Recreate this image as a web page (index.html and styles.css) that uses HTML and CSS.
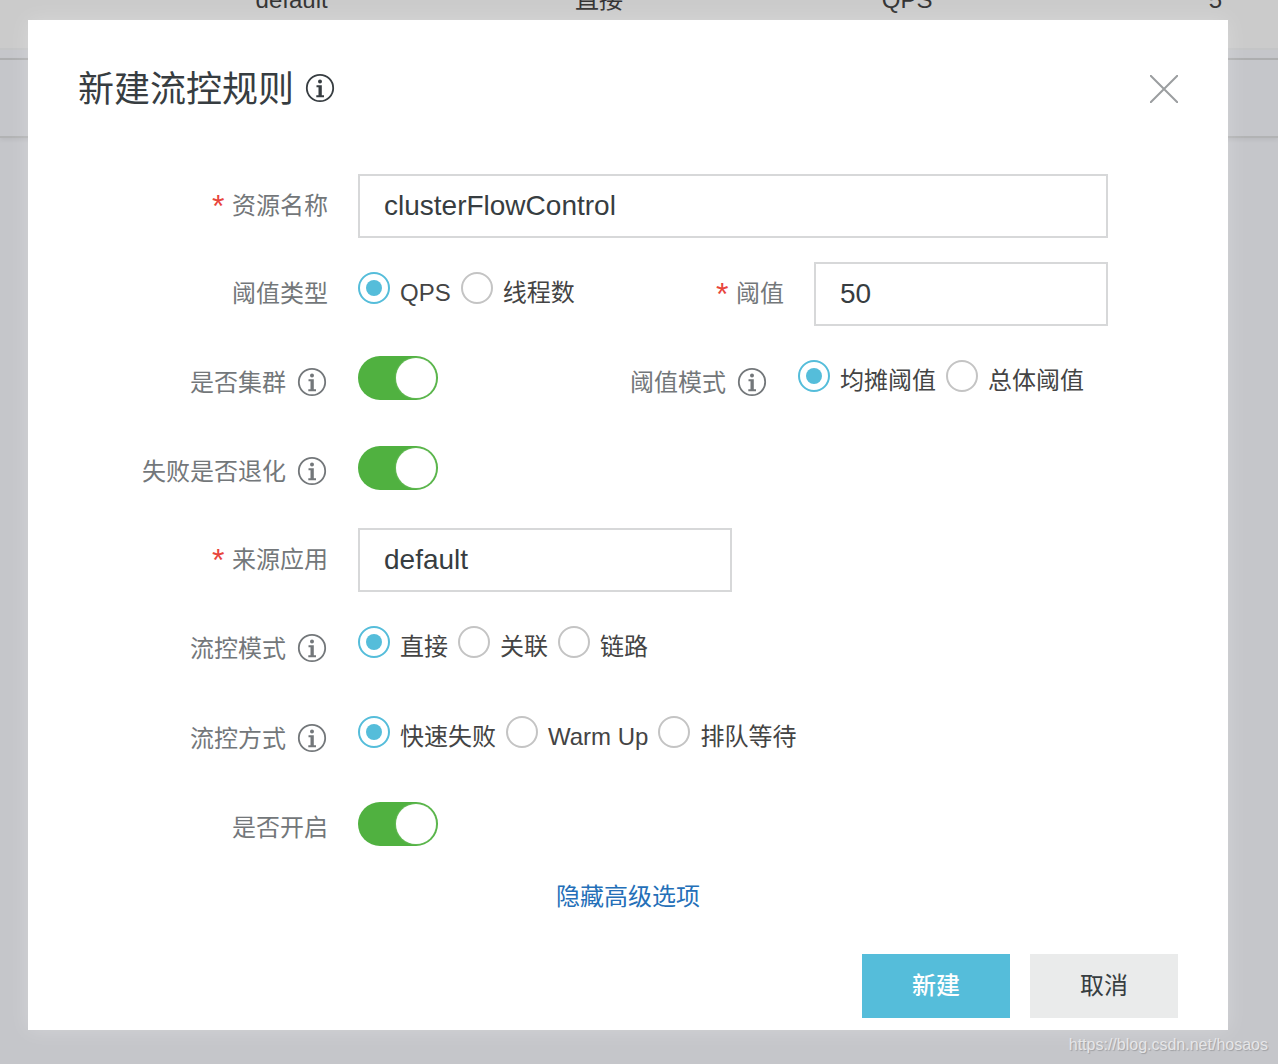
FILE: index.html
```html
<!DOCTYPE html>
<html lang="zh-CN">
<head>
<meta charset="utf-8">
<meta name="viewport" content="width=device-width, initial-scale=1">
<title>新建流控规则</title>
<link rel="stylesheet" href="styles.css">
</head>
<body>
<svg class="sprite" aria-hidden="true">
  <symbol id="info" viewBox="0 0 32 32">
    <circle cx="16" cy="15" r="13.200" fill="none" stroke="currentColor" stroke-width="1.800"/>
    <circle cx="16" cy="8.500" r="2" fill="currentColor"/>
    <path d="M12.500 12.300h5.300v10h2.200v2h-7.700v-2h2.200v-8h-2z" fill="currentColor"/>
  </symbol>
</svg>

<main class="page">
  <table class="rules">
    <tr><td class="col-blank"></td><td class="col-wide">default</td><td class="col-mid">直接</td><td class="col-last">QPS</td><td>5</td></tr>
  </table>
  <div class="pager"></div>
</main>

<div class="overlay">
  <section class="modal" role="dialog" aria-labelledby="dialog-title">
    <header class="modal-header">
      <h1 class="title" id="dialog-title">新建流控规则</h1>
      <svg class="info title-info" role="img" aria-label="说明"><use href="#info"/></svg>
      <button class="close" type="button" aria-label="关闭">
        <svg viewBox="0 0 28 28"><path d="M0 0l28 28M28 0L0 28" fill="none" stroke="currentColor" stroke-width="2"/></svg>
      </button>
    </header>

    <form>
      <div class="rows">
        <div class="row">
          <label class="name" for="resource"><span class="required">*</span>资源名称</label>
          <input class="text" id="resource" type="text" value="clusterFlowControl">
        </div>

        <div class="row">
          <span class="name" id="type-name">阈值类型</span>
          <div class="radios" role="radiogroup" aria-labelledby="type-name">
            <label class="radio"><input type="radio" name="type" checked>QPS</label>
            <label class="radio"><input type="radio" name="type">线程数</label>
          </div>
          <label class="side-name" for="threshold"><span class="required">*</span>阈值</label>
          <input class="text side-input" id="threshold" type="text" value="50">
        </div>

        <div class="row row-tall">
          <label class="name" for="cluster">是否集群<svg class="info" role="img" aria-label="说明"><use href="#info"/></svg></label>
          <input class="switch" id="cluster" type="checkbox" role="switch" checked>
          <span class="side-name" id="mode-name">阈值模式<svg class="info" role="img" aria-label="说明"><use href="#info"/></svg></span>
          <div class="radios side-radios" role="radiogroup" aria-labelledby="mode-name">
            <label class="radio"><input type="radio" name="mode" checked>均摊阈值</label>
            <label class="radio"><input type="radio" name="mode">总体阈值</label>
          </div>
        </div>

        <div class="row">
          <label class="name" for="fallback">失败是否退化<svg class="info" role="img" aria-label="说明"><use href="#info"/></svg></label>
          <input class="switch" id="fallback" type="checkbox" role="switch" checked>
        </div>

        <div class="row">
          <label class="name" for="origin"><span class="required">*</span>来源应用</label>
          <input class="text origin" id="origin" type="text" value="default">
        </div>

        <div class="row row-tall">
          <span class="name" id="strategy-name">流控模式<svg class="info" role="img" aria-label="说明"><use href="#info"/></svg></span>
          <div class="radios" role="radiogroup" aria-labelledby="strategy-name">
            <label class="radio"><input type="radio" name="strategy" checked>直接</label>
            <label class="radio"><input type="radio" name="strategy">关联</label>
            <label class="radio"><input type="radio" name="strategy">链路</label>
          </div>
        </div>

        <div class="row row-tall">
          <span class="name" id="behavior-name">流控方式<svg class="info" role="img" aria-label="说明"><use href="#info"/></svg></span>
          <div class="radios" role="radiogroup" aria-labelledby="behavior-name">
            <label class="radio"><input type="radio" name="behavior" checked>快速失败</label>
            <label class="radio"><input type="radio" name="behavior">Warm Up</label>
            <label class="radio"><input type="radio" name="behavior">排队等待</label>
          </div>
        </div>

        <div class="row">
          <label class="name" for="enabled">是否开启</label>
          <input class="switch" id="enabled" type="checkbox" role="switch" checked>
        </div>
      </div>

      <p class="advanced"><a href="#">隐藏高级选项</a></p>

      <footer class="actions">
        <button class="button primary" type="submit">新建</button>
        <button class="button" type="button">取消</button>
      </footer>
    </form>
  </section>
</div>
<div class="watermark">https://blog.csdn.net/hosaos</div>
</body>
</html>
```

FILE: styles.css
```css
* {
  box-sizing: border-box;
}

html {
  min-height: 100%;
  background: #c5c6ca;
}

body {
  position: relative;
  min-height: 100vh;
  margin: 0;
  overflow-x: hidden;
  color: #333;
  font: 24px/42px "Liberation Sans", "Noto Sans CJK SC", sans-serif;
}

input,
button {
  margin: 0;
  font-family: inherit;
}

.sprite {
  position: absolute;
  width: 0;
  height: 0;
}

/* Page under the dialog, scrolled part of the way down */
.page {
  position: absolute;
  inset: 0;
  overflow: hidden;
}

.rules {
  width: 100%;
  height: 98px;
  margin-top: -48px;
  border-collapse: collapse;
  table-layout: fixed;
  background: #cbcbcb;
}

.rules td {
  padding: 0;
  border-bottom: 2px solid #c4c5c6;
}

.col-blank {
  width: 20%;
}

.col-wide {
  width: 25%;
}

.col-mid {
  width: 24%;
}

.col-last {
  width: 25%;
}

.rules td:last-child {
  padding-right: 56px;
  text-align: right;
}

.pager {
  height: 80px;
  margin-top: 8px;
  border-top: 2px solid #adaeaf;
  border-bottom: 2px solid #b2b3b4;
  box-shadow: 0 2px 4px rgba(0, 0, 0, 0.06);
}

/* Dialog */
.overlay {
  position: relative;
  padding: 20px 50px 34px 28px;
}

.modal {
  padding: 44px 50px 12px;
  background: #fff;
  box-shadow: 0 0 20px rgba(255, 255, 255, 0.25);
}

.modal-header {
  display: flex;
  align-items: center;
  gap: 10px;
  margin-bottom: 60px;
}

.title {
  margin: 0;
  padding-top: 2px;
  color: #373d41;
  font-size: 36px;
  font-weight: 400;
  line-height: 48px;
}

.info {
  flex: none;
  width: 32px;
  height: 32px;
}

.title-info {
  color: #373d41;
}

.close {
  width: 28px;
  height: 28px;
  margin-left: auto;
  padding: 0;
  border: 0;
  background: none;
  color: #9b9ea0;
}

.close svg {
  display: block;
}

.rows {
  display: flex;
  flex-direction: column;
  gap: 24px;
  padding-right: 70px;
}

.row {
  display: flex;
  align-items: flex-start;
  min-height: 64px;
}

.row-tall {
  min-height: 66px;
}

.name,
.side-name {
  display: flex;
  flex: none;
  align-items: center;
  align-self: stretch;
  justify-content: flex-end;
  gap: 10px;
  margin-right: 30px;
  color: #73777a;
}

.name {
  width: 250px;
}

.side-name {
  margin-left: auto;
}

.required {
  width: 10px;
  color: #e8453c;
  font-size: 32px;
}

.text {
  flex: 1;
  min-width: 0;
  height: 64px;
  padding: 0 24px;
  border: 2px solid #d7d8d9;
  border-radius: 0;
  background: #fff;
  color: #373d41;
  font-size: 28px;
}

.side-input {
  flex: 0 0 294px;
}

.origin {
  flex: 0 0 374px;
}

.radios {
  display: flex;
  gap: 10px;
  padding-top: 10px;
}

.side-radios {
  width: 310px;
}

.radio {
  display: flex;
  align-items: flex-start;
  gap: 10px;
  color: #444;
  white-space: nowrap;
}

.radio input {
  flex: none;
  width: 32px;
  height: 32px;
  border: 2px solid #c4c4c4;
  border-radius: 50%;
  appearance: none;
  background: #fff;
}

.radio input:checked {
  padding: 6px;
  border-color: #55bdda;
  background: #55bdda content-box;
}

.switch {
  display: flex;
  flex: none;
  width: 80px;
  height: 44px;
  margin-top: 6px;
  padding: 2px;
  border-radius: 22px;
  appearance: none;
  background: #c4c4c4;
}

.switch::before {
  width: 40px;
  height: 40px;
  border-radius: 50%;
  background: #fff;
  box-shadow: 0 0 2px rgba(255, 255, 255, 0.4);
  content: "";
}

.switch:checked {
  justify-content: flex-end;
  background: #50b140;
}

.advanced {
  margin: 0 0 20px;
  line-height: 74px;
  text-align: center;
}

.advanced a {
  color: #246fb8;
  text-decoration: none;
}

.actions {
  display: flex;
  justify-content: flex-end;
  gap: 20px;
}

.button {
  width: 148px;
  height: 64px;
  padding: 0 0 6px;
  border: 0;
  background: #eaebeb;
  color: #373d41;
  font-size: 24px;
}

.primary {
  background: #55bdda;
  color: #fff;
  font-weight: 500;
}

.watermark {
  position: absolute;
  right: 10px;
  bottom: 8px;
  color: #e6e6e8;
  font-size: 16px;
  line-height: 22px;
  text-shadow: 1px 1px 1px rgba(0, 0, 0, 0.2);
}
```
